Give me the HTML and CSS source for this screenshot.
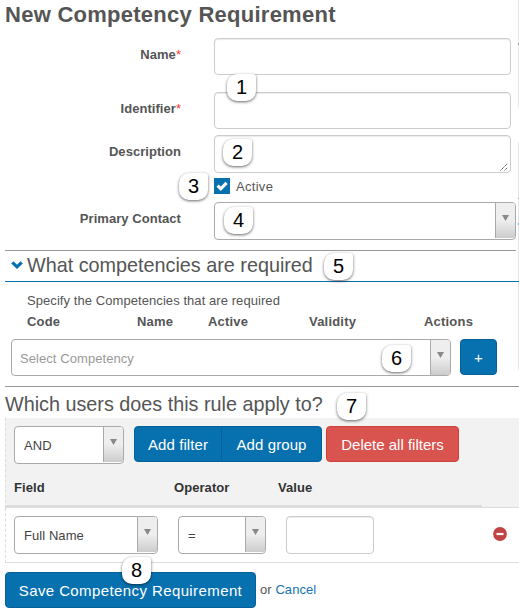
FILE: index.html
```html
<!DOCTYPE html>
<html lang="en">
<head>
<meta charset="utf-8">
<title>New Competency Requirement</title>
<link rel="stylesheet" href="styles.css">
</head>
<body>
<main class="page">
  <h1 class="title">New Competency Requirement</h1>
  <form class="form">
    <div class="row row-name"><label class="label">Name<span class="star">*</span></label><div class="input"></div></div>
    <div class="row row-identifier"><label class="label">Identifier<span class="star">*</span></label><div class="input"></div></div>
    <div class="row row-description"><label class="label">Description</label>
      <div class="input textarea"><svg class="grip" viewBox="0 0 8 8"><path d="M.5 7.5l7-7M4.5 7.5l3-3"/></svg></div></div>
    <div class="active-row"><span class="checkbox"><svg viewBox="0 0 16 16"><path d="M3.6 7.6l3.200 3.200 5.800-6"/></svg></span><span class="active-text">Active</span></div>
    <div class="row row-contact"><label class="label">Primary Contact</label>
      <div class="select"><span class="value"></span><span class="arrow"></span></div></div>

    <section class="competencies">
      <h2 class="heading toggle"><svg class="chevron" viewBox="0 0 12 8"><path d="M1.300 1.300L6 5.800l4.700-4.500"/></svg>What competencies are required</h2>
      <p class="hint">Specify the Competencies that are required</p>
      <div class="columns"><span>Code</span><span>Name</span><span>Active</span><span>Validity</span><span>Actions</span></div>
      <div class="picker">
        <div class="select wide"><span class="value placeholder">Select Competency</span><span class="arrow"></span></div>
        <button type="button" class="btn add">+</button>
      </div>
    </section>

    <section class="users">
      <h2 class="heading">Which users does this rule apply to?</h2>
      <div class="filters">
        <div class="toolbar">
          <div class="select"><span class="value">AND</span><span class="arrow"></span></div>
          <div class="group"><button type="button" class="btn">Add filter</button><button type="button" class="btn">Add group</button></div>
          <button type="button" class="btn danger">Delete all filters</button>
        </div>
        <div class="filter-head"><span>Field</span><span>Operator</span><span>Value</span></div>
        <div class="bar"></div>
      </div>
      <div class="filter-row">
        <div class="select field"><span class="value">Full Name</span><span class="arrow"></span></div>
        <div class="select operator"><span class="value">=</span><span class="arrow"></span></div>
        <div class="input small"></div>
        <svg class="remove" viewBox="0 0 14 14"><circle cx="7" cy="7" r="6.900"/><path d="M3.500 7h7"/></svg>
      </div>
    </section>

    <div class="submit"><button type="button" class="btn save">Save Competency Requirement</button><span>or <a class="link">Cancel</a></span></div>
  </form>
  <span class="badge b1">1</span><span class="badge b2">2</span><span class="badge b3">3</span><span class="badge b4">4</span>
  <span class="badge b5">5</span><span class="badge b6">6</span><span class="badge b7">7</span><span class="badge b8">8</span>
</main>
</body>
</html>
```
FILE: styles.css
```css
* { box-sizing: border-box; }
body {
  margin: 0;
  background: #fff;
  color: #555;
  font: 13px/18px "Liberation Sans", Arial, sans-serif;
  letter-spacing: .07px;
}
.page {
  position: relative;
  width: 519px;
  height: 610px;
  padding-left: 5px;
  overflow: hidden;
  background: linear-gradient(#e6e6e6 0 43px, #999 43px 45px, #e6e6e6 45px 108px, #fff 108px 142px, #e6e6e6 142px 198px, #aaa 198px 199px, #e6e6e6 199px 223px, #7aa 223px 225px, #e6e6e6 225px 370px, #fff 370px) right / 1px 610px no-repeat;
}
.title { margin: 0; height: 38px; font-size: 22px; line-height: 29px; letter-spacing: .26px; }
.row { display: flex; }
.row-name { height: 54px; }
.row-identifier { height: 43px; }
.row-description { height: 43px; }
.row-contact { height: 48px; }
.label { width: 176px; margin-right: 33px; padding-top: 8px; text-align: right; font-weight: bold; letter-spacing: .05px; }
.star { color: #f33; font-weight: normal; }
.input { width: 297px; height: 37px; border: 1px solid #ccc; border-radius: 4px; background: #fff; box-shadow: inset 0 1px 1px rgba(0,0,0,.08); }
.textarea { display: flex; align-items: flex-end; justify-content: flex-end; height: 38px; padding: 0 2px 1px 0; }
.grip { width: 8px; height: 8px; fill: none; stroke: #555; stroke-width: 1; stroke-dasharray: 1.400 .6; }
.active-row { display: flex; align-items: center; gap: 6px; height: 16px; margin: 0 0 8px 209px; letter-spacing: .3px; }
.active-text { padding-top: 2px; }
.checkbox { width: 16px; height: 16px; background: #0771b0; }
.checkbox svg { display: block; fill: none; stroke: #fff; stroke-width: 3.100; }
.select { display: flex; width: 302px; height: 38px; border: 1px solid #aaa; border-radius: 4px; background: #fff; overflow: hidden; }
.value { flex: 1; padding-left: 9px; line-height: 38px; color: #444; }
.placeholder { padding-left: 8px; color: #999; }
.arrow { display: flex; justify-content: center; width: 20px; height: 35px; border-left: 1px solid #aaa; background: linear-gradient(#eee 50%, #ccc); }
.arrow::before { content: ""; width: 7px; height: 6px; margin-top: 12px; background: #888; clip-path: polygon(0 0, 100% 0, 50% 100%); }
.competencies { height: 136px; border-top: 1px solid #999; margin-right: 3px; }
.heading { margin: 0; font-size: 19.800px; font-weight: normal; line-height: 29px; letter-spacing: 0; }
.toggle { display: flex; align-items: center; gap: 4px; width: 514px; height: 31px; padding: 0 0 2px 6px; border-bottom: 1px solid #0771b0; }
.chevron { width: 12px; height: 8px; fill: none; stroke: #0771b0; stroke-width: 3.200; }
.hint { margin: 10px 0 0 22px; }
.columns { display: grid; grid-template-columns: 110px 71px 101px 115px 1fr; margin: 3px 0 8px 22px; font-weight: bold; letter-spacing: .2px; }
.picker { display: flex; gap: 9px; padding-left: 6px; }
.wide { width: 440px; height: 37px; }
.btn { height: 36px; padding: 1px 0 0; border: 1px solid #06609a; border-radius: 4px; background: #0771b0; color: #fff; font: 15px/33px "Liberation Sans", Arial, sans-serif; letter-spacing: .1px; white-space: nowrap; }
.add { width: 37px; height: 36px; padding: 0; }
.users { height: 186px; width: 514px; border-top: 1px solid #999; }
.users .heading { height: 31px; line-height: 34px; }
.filters { height: 90px; padding-top: 8px; border-left: 1px dashed #ddd; border-bottom: 1px solid #ddd; background: #f2f2f2; }
.toolbar { display: flex; height: 53px; padding-left: 8px; }
.toolbar .select { width: 110px; margin-right: 10px; }
.group { display: flex; width: 188px; margin-right: 4px; }
.group .btn:first-child { width: 88px; border-radius: 4px 0 0 4px; }
.group .btn:last-child { width: 101px; margin-left: -1px; border-radius: 0 4px 4px 0; }
.danger { width: 133px; border-color: #d43f3a; background: #d9534f; letter-spacing: 0; }
.filter-head { display: grid; grid-template-columns: 160px 104px 1fr; height: 26px; padding-left: 8px; color: #333; font-weight: bold; }
.bar { width: 476px; height: 2px; background: #ddd; }
.filter-row { display: flex; height: 55px; padding: 8px 0 0 8px; border-left: 1px dashed #ddd; border-bottom: 1px solid #ddd; }
.field { width: 144px; margin-right: 20px; }
.operator { width: 88px; margin-right: 20px; }
.small { width: 88px; height: 38px; }
.remove { width: 14px; height: 14px; margin: 11px 0 0 119px; fill: #c04443; stroke: none; }
.remove path { stroke: #fff; stroke-width: 2.200; }
.submit { display: flex; gap: 4px; line-height: 35px; }
.save { width: 251px; letter-spacing: .4px; }
.link { color: #1673b1; }
.badge { position: absolute; width: 29px; height: 27px; border-radius: 10px 3px 10px 10px; background: #fff; box-shadow: 0 1px 3px rgba(0,0,0,.6); color: #000; font-size: 20px; line-height: 26px; letter-spacing: 0; text-align: center; }
.b1 { left: 227px; top: 74px; }
.b2 { left: 223px; top: 139px; }
.b3 { left: 179px; top: 173px; }
.b4 { left: 224px; top: 207px; }
.b5 { left: 324px; top: 253px; }
.b6 { left: 382px; top: 345px; }
.b7 { left: 337px; top: 393px; }
.b8 { left: 122px; top: 557px; }
```
